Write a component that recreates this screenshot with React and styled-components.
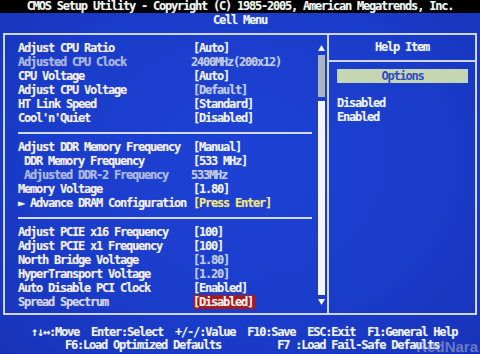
import React from "react";
import styled, { createGlobalStyle } from "styled-components";

const Global = createGlobalStyle`
html, body {
margin: 0;
padding: 0;
background: #1b3dcc;
}
`

const Screen = styled.div`
width: 480px;
height: 354px;
position: relative;
overflow: hidden;
display: flex;
flex-direction: column;
background: radial-gradient(ellipse at 50% 45%, #1d42d4 0%, #1a3cca 60%, #1733b8 100%);
font-family: "DejaVu Sans Mono", "Liberation Mono", monospace;
font-weight: bold;
font-size: 12px;
letter-spacing: -1.22px;
color: #f0f0ec;
text-shadow: 0 0 1px rgba(255, 255, 255, 0.35);
`

const TitleBar = styled.div`
height: 13px;
line-height: 13px;
background: #000;
text-align: center;
color: #f4f4ee;
`

const MenuTitle = styled.div`
height: 20px;
line-height: 14px;
text-align: center;
`

const Frame = styled.div`
margin: 0 3px;
height: 282px;
box-sizing: border-box;
border: 2px solid #cdd5e6;
display: grid;
grid-template-columns: 1fr 148px;
`

const LeftPanel = styled.div`
display: flex;
padding: 0 2px 0 13px;
`

const List = styled.div`
flex: 1;
padding-top: 6px;
`

const Row = styled.div`
display: grid;
grid-template-columns: 175px auto;
height: 14px;
line-height: 14px;
white-space: pre;
`

const labelColors = {
  normal: "#f0f0ec",
  dim: "#a9bae0",
  soft: "#d2d6e6",
}

const Label = styled.span`
padding-left: ${p => (p.$indent ? "6px" : "0")};
color: ${p => labelColors[p.$tone || "normal"]};
`

const valueColors = {
  normal: "#f0f0ec",
  dim: "#c0c9e2",
  yellow: "#f6e67a",
  selected: "#f4f0ee",
}

const Value = styled.span`
justify-self: start;
margin-left: ${p => (p.$bare ? "-2px" : "0")};
color: ${p => valueColors[p.$tone || "normal"]};
background: ${p => (p.$tone === "selected" ? "#a8191c" : "transparent")};
padding-right: ${p => (p.$tone === "selected" ? "3px" : "0")};
`

const Separator = styled.div`
height: 2px;
margin: 7px 6px 6px 0;
background: #d3dae8;
`

const ScrollBar = styled.div`
width: 7px;
padding: 10px 0 8px;
display: flex;
flex-direction: column;
align-items: center;
gap: 4px;
`

const Thumb = styled.div`
width: 7px;
height: 42px;
background: #a9b4c4;
`

const Track = styled.div`
width: 7px;
flex: 1;
background: #f2f4f8;
`

const RightPanel = styled.div`
border-left: 2px solid #cdd5e6;
display: flex;
flex-direction: column;
`

const HelpHeader = styled.div`
height: 25px;
line-height: 25px;
border-bottom: 2px solid #cdd5e6;
text-align: center;
`

const OptionsBar = styled.div`
margin: 7px 7px 0 8px;
height: 14px;
line-height: 14px;
background: #c5d6b3;
color: #2b4bc6;
text-align: center;
text-shadow: none;
`

const HelpList = styled.div`
margin-top: 13px;
padding-left: 8px;
line-height: 14px;
`

const Footer = styled.div`
padding-top: 11px;
`

const FooterLine = styled.div`
display: flex;
gap: ${p => p.$gap}px;
padding-left: ${p => p.$indent}px;
height: 13px;
line-height: 13px;
white-space: pre;
`

const Watermark = styled.div`
position: absolute;
right: 2px;
bottom: -1px;
font-family: "Liberation Sans", Arial, sans-serif;
font-size: 15px;
font-weight: bold;
letter-spacing: 0;
color: rgba(190, 190, 205, 0.5);
text-shadow: none;
pointer-events: none;
`

const Arrow = ({ down }) => (
  <svg width="7" height="6" viewBox="0 0 7 6">
    <polygon points={down ? "0,0 7,0 3.5,6" : "3.5,0 7,6 0,6"} fill="#f2f4f8" />
  </svg>
)

const groups = [
  [
    { label: "Adjust CPU Ratio", value: "[Auto]" },
    { label: "Adjusted CPU Clock", tone: "dim", value: "2400MHz(200x12)", vtone: "dim", bare: true },
    { label: "CPU Voltage", value: "[Auto]" },
    { label: "Adjust CPU Voltage", value: "[Default]", vtone: "dim" },
    { label: "HT Link Speed", value: "[Standard]" },
    { label: "Cool'n'Quiet", value: "[Disabled]" },
  ],
  [
    { label: "Adjust DDR Memory Frequency", value: "[Manual]" },
    { label: "DDR Memory Frequency", indent: true, value: "[533 MHz]" },
    { label: "Adjusted DDR-2 Frequency", indent: true, tone: "dim", value: "533MHz", vtone: "dim", bare: true },
    { label: "Memory Voltage", value: "[1.80]" },
    { label: "► Advance DRAM Configuration", value: "[Press Enter]", vtone: "yellow" },
  ],
  [
    { label: "Adjust PCIE x16 Frequency", value: "[100]" },
    { label: "Adjust PCIE x1 Frequency", value: "[100]" },
    { label: "North Bridge Voltage", value: "[1.80]", vtone: "dim" },
    { label: "HyperTransport Voltage", value: "[1.20]", vtone: "dim" },
    { label: "Auto Disable PCI Clock", value: "[Enabled]" },
    { label: "Spread Spectrum", tone: "soft", value: "[Disabled]", vtone: "selected" },
  ],
]

const App = () => {
  return (
    <Screen>
      <Global />
      <TitleBar>CMOS Setup Utility - Copyright (C) 1985-2005, American Megatrends, Inc.</TitleBar>
      <MenuTitle>Cell Menu</MenuTitle>
      <Frame>
        <LeftPanel>
          <List>
            {groups.map((group, gi) => (
              <React.Fragment key={gi}>
                {gi > 0 && <Separator />}
                {group.map(item => (
                  <Row key={item.label}>
                    <Label $indent={item.indent} $tone={item.tone}>{item.label}</Label>
                    <Value $tone={item.vtone} $bare={item.bare}>{item.value}</Value>
                  </Row>
                ))}
              </React.Fragment>
            ))}
          </List>
          <ScrollBar>
            <Arrow />
            <Thumb />
            <Track />
            <Arrow down />
          </ScrollBar>
        </LeftPanel>
        <RightPanel>
          <HelpHeader>Help Item</HelpHeader>
          <OptionsBar>Options</OptionsBar>
          <HelpList>
            <div>Disabled</div>
            <div>Enabled</div>
          </HelpList>
        </RightPanel>
      </Frame>
      <Footer>
        <FooterLine $indent={31} $gap={12}>
          <span>↑↓↔:Move</span>
          <span>Enter:Select</span>
          <span>+/-/:Value</span>
          <span>F10:Save</span>
          <span>ESC:Exit</span>
          <span>F1:General Help</span>
        </FooterLine>
        <FooterLine $indent={65} $gap={56}>
          <span>F6:Load Optimized Defaults</span>
          <span>F7 :Load Fail-Safe Defaults</span>
        </FooterLine>
      </Footer>
      <Watermark>RedNara</Watermark>
    </Screen>
  )
}

export default App
